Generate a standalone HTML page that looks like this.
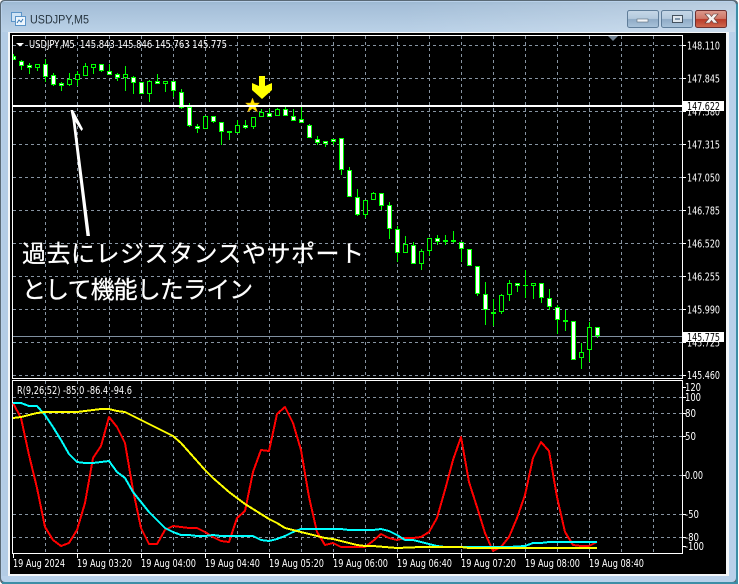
<!DOCTYPE html>
<html><head><meta charset="utf-8"><style>
html,body{margin:0;padding:0;width:739px;height:584px;overflow:hidden;background:#b9d1ea}
svg{display:block}
.ax{font:10.5px "DejaVu Sans","Liberation Sans",sans-serif;fill:#fff}
.jp{font:24px "Noto Sans CJK JP","Liberation Sans",sans-serif;fill:#fff;stroke:#fff;stroke-width:.25}
</style></head><body>
<svg width="739" height="584" viewBox="0 0 739 584" xmlns="http://www.w3.org/2000/svg">
<defs>
<linearGradient id="tb" x1="0" y1="0" x2="0" y2="1"><stop offset="0" stop-color="#9db9d2"/><stop offset=".12" stop-color="#a5bfd8"/><stop offset="1" stop-color="#bad1e7"/></linearGradient>
<linearGradient id="tr" x1="0" y1="0" x2="1" y2="0"><stop offset="0" stop-color="#fff" stop-opacity="0"/><stop offset="1" stop-color="#fff" stop-opacity=".25"/></linearGradient>
<linearGradient id="btn" x1="0" y1="0" x2="0" y2="1"><stop offset="0" stop-color="#c6d8e8"/><stop offset=".48" stop-color="#b3c9dd"/><stop offset=".52" stop-color="#8fabc6"/><stop offset="1" stop-color="#a9c3da"/></linearGradient>
<linearGradient id="cls" x1="0" y1="0" x2="0" y2="1"><stop offset="0" stop-color="#dc9a8e"/><stop offset=".48" stop-color="#cf7666"/><stop offset=".52" stop-color="#b93a28"/><stop offset="1" stop-color="#cf6a50"/></linearGradient>
</defs>

<!-- window frame -->
<rect width="739" height="584" fill="#fff"/>
<rect x="0" y="0" width="738" height="584" rx="4" fill="#5a6a76"/>
<rect x="1" y="1" width="735" height="581" rx="4" fill="#b9d1ea"/>
<rect x="2" y="2" width="733" height="30" fill="url(#tb)"/>
<rect x="400" y="2" width="335" height="30" fill="url(#tr)"/>
<rect x="2" y="582" width="735" height="2" fill="#3d8ea6"/>
<rect x="736" y="4" width="2" height="580" fill="#3d8ea6"/>
<rect x="2" y="32" width="6" height="544" fill="#b3cce5"/>
<rect x="8" y="32" width="721" height="544" fill="#f4f6f8"/>
<rect x="10" y="33" width="716" height="541" fill="#000"/>

<!-- title bar -->
<g>
<rect x="11.500" y="12.500" width="10" height="9" fill="#cfe3f5" stroke="#5b94c8"/>
<rect x="15.500" y="16.500" width="10" height="9" fill="#eef6fd" stroke="#5b94c8"/>
<path d="M17 23l2-3 2 2 2-3" fill="none" stroke="#3a7ab5"/>
<text x="30" y="23.500" font-family="Liberation Sans,sans-serif" font-size="12" fill="#26343f" textLength="59" lengthAdjust="spacingAndGlyphs">USDJPY,M5</text>
</g>
<rect x="627.500" y="10.500" width="31" height="17" rx="2" fill="url(#btn)" stroke="#5f7d99"/>
<rect x="637" y="19" width="11" height="3" fill="#f2f5f8" stroke="#5a6a78" stroke-width=".6"/>
<rect x="661.500" y="10.500" width="31" height="17" rx="2" fill="url(#btn)" stroke="#5f7d99"/>
<rect x="672.500" y="15.500" width="10" height="7" fill="#dfe7ee" stroke="#44525f"/><rect x="675" y="18" width="5" height="2" fill="#7f96ab"/>
<rect x="695.500" y="10.500" width="31" height="17" rx="2" fill="url(#cls)" stroke="#6e3030"/>
<path d="M705 14h4.500l2 2.500 2-2.500h4.500l-4 4.500 4 4.500h-4.500l-2-2.500-2 2.500h-4.500l4-4.500z" fill="#f6f2f0" stroke="#5a3a38" stroke-width=".6"/>

<!-- plot borders -->
<path d="M12.500 378.500V35.500H682.500V378.500ZM12.500 553.500V380.500H682.500V553.500Z" fill="none" stroke="#fff"/>

<!-- grid -->
<g stroke="#8794a2" stroke-dasharray="3 3" fill="none">
<path d="M45.500 36V378M77.500 36V378M109.500 36V378M141.500 36V378M173.500 36V378M205.500 36V378M237.500 36V378M269.500 36V378M301.500 36V378M333.500 36V378M365.500 36V378M397.500 36V378M429.500 36V378M461.500 36V378M493.500 36V378M525.500 36V378M557.500 36V378M589.500 36V378M621.500 36V378M653.500 36V378"/>
<path d="M13 45.500H682M13 78.500H682M13 111.500H682M13 144.500H682M13 177.500H682M13 210.500H682M13 243.500H682M13 276.500H682M13 309.500H682M13 342.500H682M13 375.500H682"/>
<path d="M45.500 381V553M77.500 381V553M109.500 381V553M141.500 381V553M173.500 381V553M205.500 381V553M237.500 381V553M269.500 381V553M301.500 381V553M333.500 381V553M365.500 381V553M397.500 381V553M429.500 381V553M461.500 381V553M493.500 381V553M525.500 381V553M557.500 381V553M589.500 381V553M621.500 381V553M653.500 381V553"/>
<path d="M13 397.500H682M13 413.500H682M13 436.500H682M13 475.500H682M13 514.500H682M13 537.500H682"/>
</g>

<!-- gray current-price line -->
<path d="M13 336.500H682" stroke="#8090a0"/>

<!-- candles -->
<g>
<path fill="none" stroke="#00ff00" stroke-width="1" d="M13.500 54V60M21.500 60V70M29.500 63V74M37.500 64V71M45.500 59V82M53.500 73V86M61.500 82V91M69.500 73V86M77.500 71V86M85.500 63V76M93.500 64V74M101.500 64V72M109.500 64V75M117.500 73V81M125.500 66V91M133.500 76V94M141.500 82V94M149.500 80V102M157.500 74V84M165.500 81V92M173.500 81V97M181.500 89V109M189.500 103V127M197.500 124V133M205.500 116V129M213.500 116V123M221.500 122V145M229.500 131V140M237.500 120V133M245.500 120V129M253.500 117V129M261.500 109V117M269.500 109V117M277.500 108V116M285.500 107V116M293.500 109V121M301.500 107V123M309.500 124V138M317.500 136V145M325.500 141V147M333.500 139V145M341.500 138V175M349.500 167V197M357.500 189V216M365.500 200V218M373.500 192V200M381.500 193V210M389.500 202V239M397.500 226V262M405.500 236V253M413.500 242V264M421.500 249V270M429.500 238V256M437.500 235V245M445.500 235V245M453.500 231V243M461.500 242V262M469.500 249V266M477.500 266V296M485.500 282V325M493.500 299V326M501.500 294V314M509.500 280V301M517.500 283V292M525.500 270V298M533.500 283V299M541.500 283V303M549.500 289V310M557.500 305V334M565.500 310V331M573.500 321V360M581.500 343V369M589.500 322V362M597.500 327V338"/>
<path fill="#00ff00" d="M443 240h5v2h-5zM491 312h5v2h-5zM523 285h5v1h-5zM563 320h5v2h-5z"/>
<path fill="#fff" stroke="#00ff00" stroke-width="1" d="M13.500 56.500h2v3h-2zM19.500 61.500h4v4h-4zM27.500 65.500h4v2h-4zM43.500 64.500h4v12h-4zM51.500 75.500h4v9h-4zM59.500 83.500h4v2h-4zM99.500 64.500h4v6h-4zM107.500 71.500h4v3h-4zM115.500 74.500h4v3h-4zM131.500 77.500h4v5h-4zM139.500 82.500h4v11h-4zM155.500 81.500h4v2h-4zM171.500 81.500h4v9h-4zM179.500 92.500h4v15h-4zM187.500 107.500h4v18h-4zM195.500 126.500h4v2h-4zM211.500 116.500h4v5h-4zM219.500 122.500h4v9h-4zM227.500 131.500h4v1h-4zM243.500 125.500h4v2h-4zM267.500 113.500h4v3h-4zM283.500 109.500h4v6h-4zM291.500 116.500h4v4h-4zM299.500 119.500h4v3h-4zM307.500 125.500h4v12h-4zM315.500 139.500h4v3h-4zM323.500 141.500h4v2h-4zM331.500 139.500h4v2h-4zM339.500 138.500h4v31h-4zM347.500 170.500h4v26h-4zM355.500 197.500h4v17h-4zM379.500 193.500h4v12h-4zM387.500 205.500h4v23h-4zM395.500 229.500h4v23h-4zM411.500 245.500h4v18h-4zM435.500 238.500h4v3h-4zM451.500 240.500h4v1h-4zM459.500 242.500h4v6h-4zM467.500 249.500h4v16h-4zM475.500 266.500h4v27h-4zM483.500 294.500h4v15h-4zM515.500 283.500h4v2h-4zM539.500 283.500h4v14h-4zM547.500 298.500h4v8h-4zM555.500 307.500h4v12h-4zM571.500 321.500h4v38h-4zM595.500 327.500h4v8h-4z"/>
<path fill="#000" stroke="#00ff00" stroke-width="1" d="M35.500 64.500h4v3h-4zM67.500 79.500h4v5h-4zM75.500 74.500h4v5h-4zM83.500 66.500h4v9h-4zM91.500 64.500h4v3h-4zM123.500 74.500h4v3h-4zM147.500 81.500h4v12h-4zM163.500 81.500h4v2h-4zM203.500 116.500h4v12h-4zM235.500 125.500h4v7h-4zM251.500 117.500h4v9h-4zM259.500 112.500h4v4h-4zM275.500 109.500h4v6h-4zM363.500 200.500h4v14h-4zM371.500 193.500h4v6h-4zM403.500 244.500h4v8h-4zM419.500 251.500h4v12h-4zM427.500 238.500h4v12h-4zM499.500 295.500h4v16h-4zM507.500 283.500h4v11h-4zM531.500 283.500h4v2h-4zM579.500 352.500h4v5h-4zM587.500 327.500h4v22h-4z"/>
</g>

<!-- star, yellow arrow, white line -->
<polygon points="252.500,98 254.500,103 259.500,103 255.500,106.500 257.500,112 252.500,108.500 247.500,112 249.500,106.500 245.500,103 250.500,103" fill="#ffe600" stroke="#d89a00" stroke-width=".5"/>
<polygon points="259,76 265,76 265,86 272,83 272,90 262,99 252,90 252,83 259,86" fill="#ffff00"/>
<rect x="13" y="105" width="669" height="2" fill="#fff"/>

<!-- white hand arrow -->
<polygon points="70.500,110 73,110 83,129 81.500,131 75.500,122 90,236 86.500,236 72.500,120" fill="#fff"/>

<!-- annotation text -->
<text class="jp" x="22" y="262" letter-spacing=".5">過去にレジスタンスやサポート</text>
<text class="jp" x="22" y="298" letter-spacing="-.9">として機能したライン</text>

<!-- header -->
<polygon points="16,43 24,43 20,46.500" fill="#fff"/>
<text class="ax" x="29" y="48" textLength="198" lengthAdjust="spacingAndGlyphs" xml:space="preserve">USDJPY,M5  145.843 145.846 145.763 145.775</text>
<polygon points="608,36 618,36 613,41" fill="#708090"/>
<text class="ax" x="17" y="394" textLength="115" lengthAdjust="spacingAndGlyphs">R(9,26,52) -85.0 -86.4 -94.6</text>

<!-- oscillator -->
<g fill="none" stroke-width="2" shape-rendering="crispEdges" stroke-linejoin="round">
<polyline stroke="#ff0000" points="13,403 21,418 29,455 37,488 45,527 53,540 61,546 69,543 77,530 85,503 93,458 101,446 109,417 117,427 125,443 133,490 141,528 149,544 157,544 165,530 173,526 181,527 189,528 197,528 205,532 213,537 221,541 229,542 237,518 245,511 253,472 261,450 269,451 277,414 285,407 293,423 301,450 309,497 317,532 325,545 333,543 341,547 349,547 357,547 365,547 373,541 381,534 389,538 397,540 405,538 413,538 421,537 429,532 437,518 445,490 453,460 461,437 469,482 477,507 485,533 493,551 501,547 509,537 517,518 525,495 533,458 541,442 549,451 557,497 565,532 573,545 581,546 589,546 597,542"/>
<polyline stroke="#00ffff" points="13,403 21,403 29,406 37,406 45,415 53,427 61,440 69,454 77,462 85,463 93,463 101,462 109,461 117,472 125,478 133,492 141,502 149,512 157,520 165,528 173,532 181,535 189,535 197,536 205,536 213,535 221,536 229,536 237,536 245,536 253,536 261,540 269,541 277,539 285,536 293,532 301,529 309,529 317,529 325,529 333,529 341,529 349,530 357,530 365,530 373,530 381,529 389,531 397,535 405,540 413,540 421,542 429,544 437,546 445,547 461,547 477,547 493,547 509,547 525,546 533,543 541,543 549,542 597,542"/>
<polyline stroke="#ffff00" points="13,418 21,417 29,415 37,413 45,412 61,412 77,412 85,411 93,410 101,409 109,409 117,411 125,412 133,416 141,420 149,424 157,428 165,432 173,436 181,443 189,452 197,461 205,470 213,478 221,485 229,492 237,498 245,504 253,509 261,514 269,519 277,523 285,528 293,530 301,532 309,534 317,536 325,538 333,539 341,541 349,543 357,545 365,546 373,546 397,548 421,547 461,547 469,548 533,548 597,548"/>
</g>

<!-- axis ticks -->
<path stroke="#fff" d="M683 45.500h3M683 78.500h3M683 111.500h3M683 144.500h3M683 177.500h3M683 210.500h3M683 243.500h3M683 276.500h3M683 309.500h3M683 342.500h3M683 375.500h3M683 387.500h3M683 397.500h3M683 413.500h3M683 436.500h3M683 475.500h3M683 514.500h3M683 537.500h3M683 546.500h3M13.500 554v4M77.500 554v4M141.500 554v4M205.500 554v4M269.500 554v4M333.500 554v4M397.500 554v4M461.500 554v4M525.500 554v4M589.500 554v4"/>

<!-- price labels -->
<g>
<text class="ax" x="687" y="49.500" textLength="33" lengthAdjust="spacingAndGlyphs">148.110</text>
<text class="ax" x="687" y="82.500" textLength="33" lengthAdjust="spacingAndGlyphs">147.845</text>
<text class="ax" x="687" y="115.500" textLength="33" lengthAdjust="spacingAndGlyphs">147.580</text>
<text class="ax" x="687" y="148.500" textLength="33" lengthAdjust="spacingAndGlyphs">147.315</text>
<text class="ax" x="687" y="181.500" textLength="33" lengthAdjust="spacingAndGlyphs">147.050</text>
<text class="ax" x="687" y="214.500" textLength="33" lengthAdjust="spacingAndGlyphs">146.785</text>
<text class="ax" x="687" y="247.500" textLength="33" lengthAdjust="spacingAndGlyphs">146.520</text>
<text class="ax" x="687" y="280.500" textLength="33" lengthAdjust="spacingAndGlyphs">146.255</text>
<text class="ax" x="687" y="313.500" textLength="33" lengthAdjust="spacingAndGlyphs">145.990</text>
<text class="ax" x="687" y="346.500" textLength="33" lengthAdjust="spacingAndGlyphs">145.725</text>
<text class="ax" x="687" y="379" textLength="33" lengthAdjust="spacingAndGlyphs">145.460</text>
</g>
<rect x="683" y="101" width="41" height="10" fill="#fff"/>
<text x="687" y="110" font-family="DejaVu Sans,sans-serif" font-size="10.5" fill="#000" textLength="33" lengthAdjust="spacingAndGlyphs">147.622</text>
<rect x="683" y="332" width="41" height="10" fill="#fff"/>
<text x="687" y="341" font-family="DejaVu Sans,sans-serif" font-size="10.5" fill="#000" textLength="33" lengthAdjust="spacingAndGlyphs">145.775</text>

<!-- oscillator labels -->
<text class="ax" x="685" y="391" textLength="16" lengthAdjust="spacingAndGlyphs">120</text>
<text class="ax" x="685" y="401" textLength="16" lengthAdjust="spacingAndGlyphs">100</text>
<text class="ax" x="685" y="417" textLength="11" lengthAdjust="spacingAndGlyphs">80</text>
<text class="ax" x="685" y="440" textLength="11" lengthAdjust="spacingAndGlyphs">50</text>
<text class="ax" x="685" y="479" textLength="18" lengthAdjust="spacingAndGlyphs">0.00</text>
<text class="ax" x="685" y="518" textLength="14" lengthAdjust="spacingAndGlyphs">-50</text>
<text class="ax" x="685" y="541" textLength="14" lengthAdjust="spacingAndGlyphs">-80</text>
<text class="ax" x="685" y="550" textLength="19" lengthAdjust="spacingAndGlyphs">-100</text>

<!-- time labels -->
<text class="ax" x="13" y="567" textLength="52" lengthAdjust="spacingAndGlyphs">19 Aug 2024</text>
<text class="ax" x="77" y="567" textLength="55" lengthAdjust="spacingAndGlyphs">19 Aug 03:20</text>
<text class="ax" x="141" y="567" textLength="55" lengthAdjust="spacingAndGlyphs">19 Aug 04:00</text>
<text class="ax" x="205" y="567" textLength="55" lengthAdjust="spacingAndGlyphs">19 Aug 04:40</text>
<text class="ax" x="269" y="567" textLength="55" lengthAdjust="spacingAndGlyphs">19 Aug 05:20</text>
<text class="ax" x="333" y="567" textLength="55" lengthAdjust="spacingAndGlyphs">19 Aug 06:00</text>
<text class="ax" x="397" y="567" textLength="55" lengthAdjust="spacingAndGlyphs">19 Aug 06:40</text>
<text class="ax" x="461" y="567" textLength="55" lengthAdjust="spacingAndGlyphs">19 Aug 07:20</text>
<text class="ax" x="525" y="567" textLength="55" lengthAdjust="spacingAndGlyphs">19 Aug 08:00</text>
<text class="ax" x="589" y="567" textLength="55" lengthAdjust="spacingAndGlyphs">19 Aug 08:40</text>
</svg>
</body></html>
